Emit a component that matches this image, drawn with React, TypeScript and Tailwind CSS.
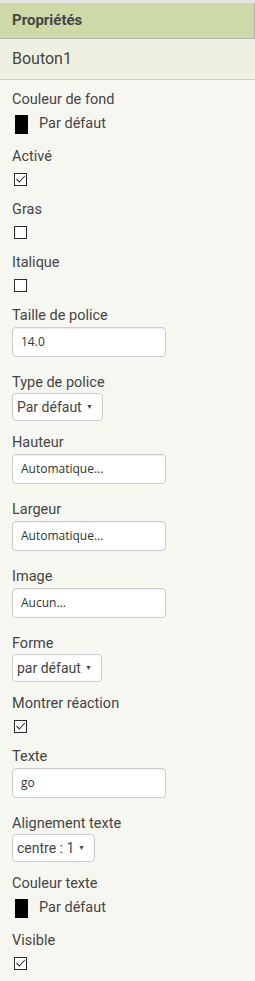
const roboto = { fontFamily: 'Roboto, "Liberation Sans", sans-serif' }

function Label({ children }: { children: React.ReactNode }) {
  return <div className="h-5 text-[14.5px] leading-5 text-[#454545]">{children}</div>
}

function Check({ checked }: { checked?: boolean }) {
  return (
    <div className="mt-[6px] mb-[14px] ml-[2px] flex h-[13px] w-[13px] items-center justify-center border border-[#2b2b2b] bg-white">
      {checked && (
        <svg width="11" height="11" viewBox="0 0 11 11" fill="none">
          <path d="M1.5 5 L4.3 8 L9.8 2" stroke="#333" strokeWidth="1.1" />
        </svg>
      )}
    </div>
  )
}

function TextBox({ value }: { value: string }) {
  return (
    <div
      className="mt-px mb-4 flex h-[30px] w-[154px] items-center rounded-[4px] border border-[#cccccc] bg-white px-2 text-[12px] text-[#333] shadow-[inset_0_1px_1px_rgba(0,0,0,0.06)]"
      style={{ fontFamily: '"Open Sans", "DejaVu Sans", sans-serif' }}
    >
      {value}
    </div>
  )
}

function Select({ value, width }: { value: string; width: string }) {
  return (
    <div
      className={`mb-3 flex h-[28px] items-center justify-between rounded-[4px] border border-[#cccccc] bg-white pl-[4px] pr-[9px] text-[14px] text-[#454545] ${width}`}
    >
      <span>{value}</span>
      <span className="text-[7px] leading-none">▼</span>
    </div>
  )
}

function Swatch() {
  return (
    <div className="mt-1 mb-[13px] flex h-5 items-center gap-[11px] pl-[3px] text-[14.5px] text-[#454545]">
      <div className="h-[19px] w-[13px] bg-black" />
      <span>Par défaut</span>
    </div>
  )
}

export default function App() {
  return (
    <div className="h-[981px] w-[255px] bg-[#f7f7f2]" style={roboto}>
      <div className="h-[3px] bg-[#e3e3e3]" />
      <div className="flex h-[36px] items-center border-r border-b border-[#b0b0a8] bg-[#cddaa8] px-3 text-[15px] font-bold text-[#454545]">
        Propriétés
      </div>
      <div className="flex h-[41px] items-center border-b border-[#cfcfc8] bg-[#eef1e2] px-3 text-[16px] text-[#454545]">
        Bouton1
      </div>
      <div className="px-3 pt-[10px]">
        <Label>Couleur de fond</Label>
        <Swatch />
        <Label>Activé</Label>
        <Check checked />
        <Label>Gras</Label>
        <Check />
        <Label>Italique</Label>
        <Check />
        <Label>Taille de police</Label>
        <TextBox value="14.0" />
        <Label>Type de police</Label>
        <Select value="Par défaut" width="w-[91px]" />
        <Label>Hauteur</Label>
        <TextBox value="Automatique..." />
        <Label>Largeur</Label>
        <TextBox value="Automatique..." />
        <Label>Image</Label>
        <TextBox value="Aucun..." />
        <Label>Forme</Label>
        <Select value="par défaut" width="w-[90px]" />
        <Label>Montrer réaction</Label>
        <Check checked />
        <Label>Texte</Label>
        <TextBox value="go" />
        <Label>Alignement texte</Label>
        <Select value="centre : 1" width="w-[83px]" />
        <Label>Couleur texte</Label>
        <Swatch />
        <Label>Visible</Label>
        <Check checked />
      </div>
    </div>
  )
}
